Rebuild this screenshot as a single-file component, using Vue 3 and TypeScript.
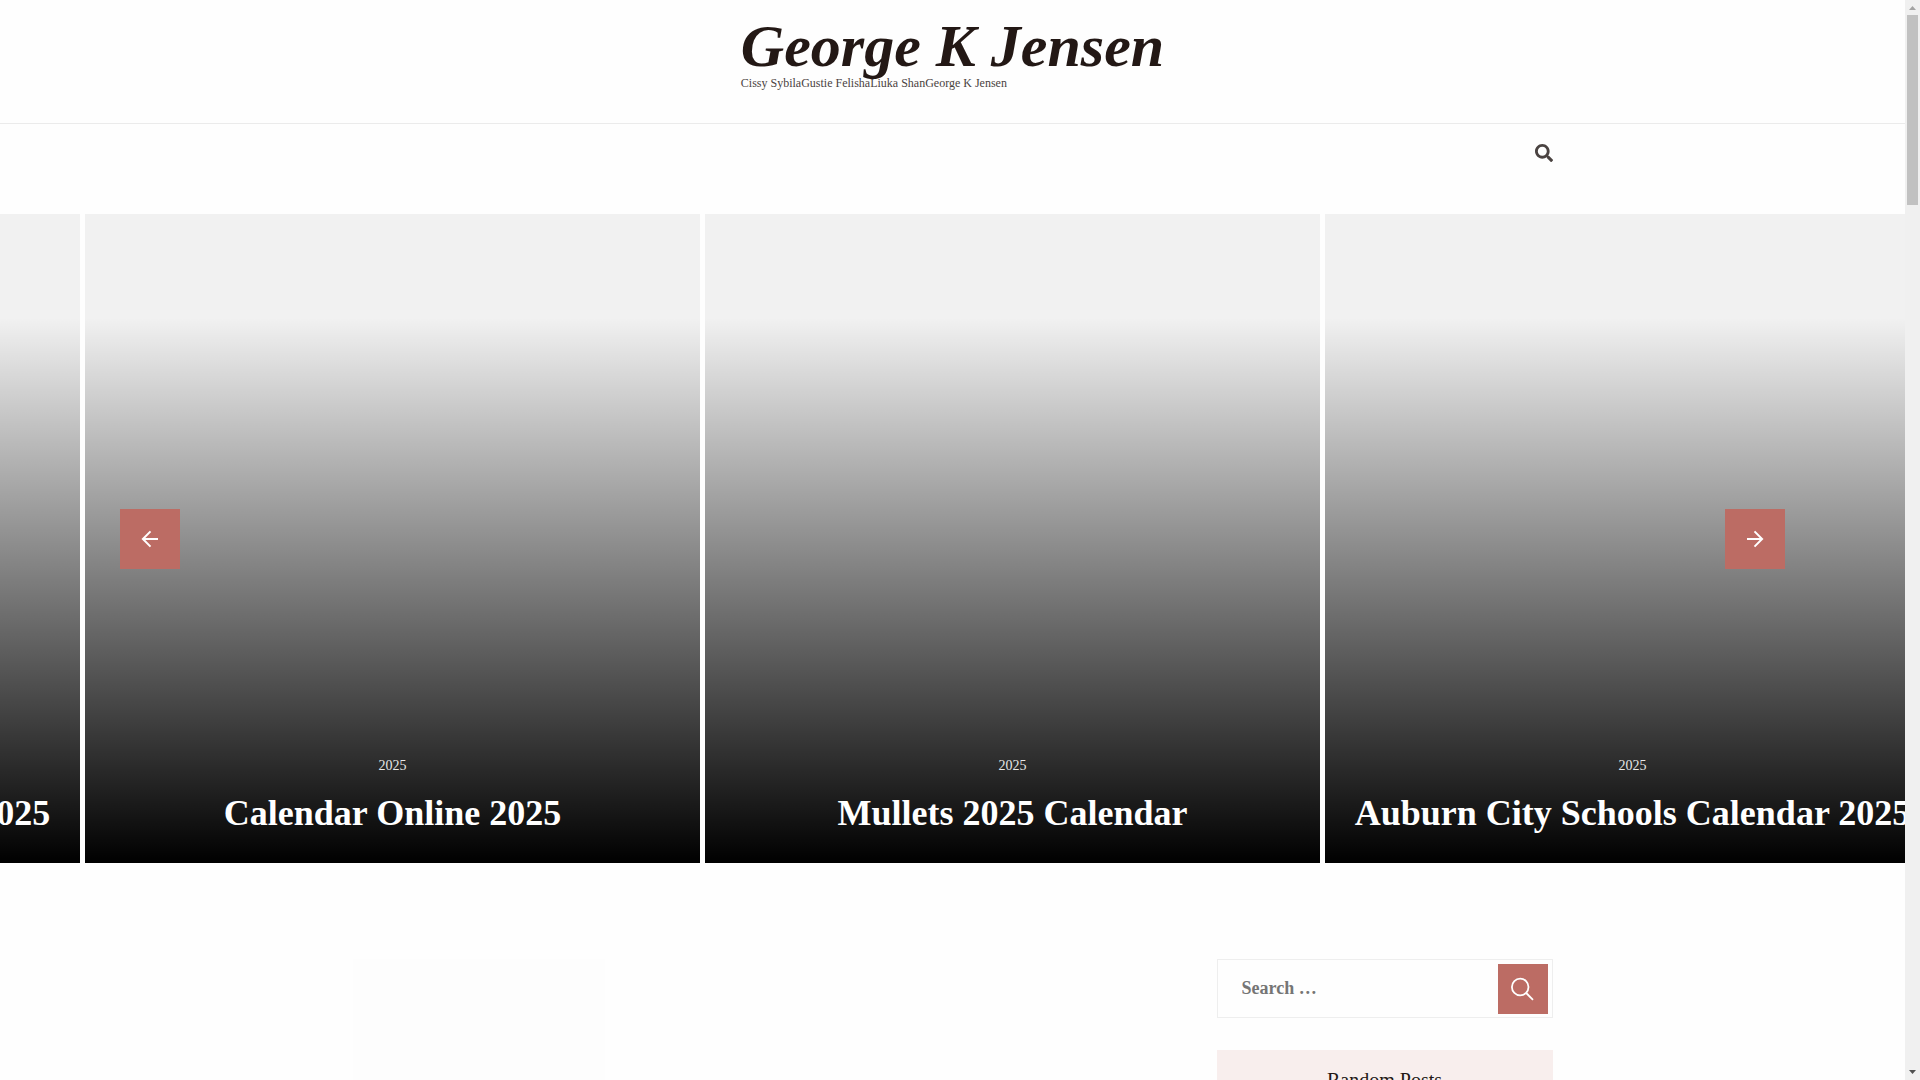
<script setup lang="ts">
import { ref } from 'vue'

interface Slide {
  category: string
  title: string
}

const slides: Slide[] = [
  { category: '2025', title: 'Auburn City Schools Calendar 2025' },
  { category: '2025', title: 'Calendar Online 2025' },
  { category: '2025', title: 'Mullets 2025 Calendar' },
  { category: '2025', title: 'Auburn City Schools Calendar 2025' },
]

const query = ref('')
</script>

<template>
  <div class="window">
    <div class="page">
      <header>
        <div class="masthead">
          <div class="branding">
            <h1><a href="#">George K Jensen</a></h1>
            <p>Cissy SybilaGustie FelishaLiuka ShanGeorge K Jensen</p>
          </div>
        </div>
        <div class="container toolbar">
          <button class="toggle" type="button" aria-label="Open search">
            <svg width="18" height="18" viewBox="0 0 512 512" fill="currentColor">
              <path d="M505 442.700L405.300 343c-4.500-4.500-10.600-7-17-7H372c27.600-35.300 44-79.700 44-128C416 93.100 322.900 0 208 0S0 93.100 0 208s93.100 208 208 208c48.300 0 92.700-16.400 128-44v16.300c0 6.400 2.500 12.500 7 17l99.700 99.700c9.400 9.400 24.600 9.400 33.900 0l28.300-28.300c9.400-9.400 9.400-24.600.1-34zM208 336c-70.700 0-128-57.200-128-128 0-70.700 57.200-128 128-128 70.700 0 128 57.200 128 128 0 70.700-57.200 128-128 128z" />
            </svg>
          </button>
        </div>
      </header>

      <section class="slider">
        <div class="track">
          <article v-for="(slide, index) in slides" :key="index" class="slide">
            <a class="category" href="#">{{ slide.category }}</a>
            <h2><a href="#">{{ slide.title }}</a></h2>
          </article>
        </div>
        <button class="nav prev" type="button" aria-label="Previous">
          <svg width="18" height="18" viewBox="0 0 18 18" fill="none" stroke="currentColor" stroke-width="2">
            <path d="M17 9H2M9.500 1.400L1.900 9L9.500 16.600" />
          </svg>
        </button>
        <button class="nav next" type="button" aria-label="Next">
          <svg width="18" height="18" viewBox="0 0 18 18" fill="none" stroke="currentColor" stroke-width="2">
            <path d="M1 9H16M8.500 1.400L16.100 9L8.500 16.600" />
          </svg>
        </button>
      </section>

      <div class="container content">
        <main><div class="thumb"></div></main>
        <aside>
          <form class="search" @submit.prevent>
            <input v-model="query" type="search" placeholder="Search …" aria-label="Search for" />
            <button type="submit" aria-label="Search">
              <svg width="24" height="24" viewBox="0 0 24 24" fill="none" stroke="currentColor" stroke-width="1.800">
                <circle cx="9.200" cy="10" r="8.300" />
                <path d="M15.200 16L22 22.800" />
              </svg>
            </button>
          </form>
          <section class="widget">
            <h2>Random Posts</h2>
          </section>
        </aside>
      </div>
    </div>

    <div class="scrollbar" aria-hidden="true">
      <svg width="15" height="15" viewBox="0 0 15 15"><path d="M4 10h7L7.500 6z" fill="#a3a3a3" /></svg>
      <div class="thumb-area"><div class="handle"></div></div>
      <svg width="15" height="15" viewBox="0 0 15 15"><path d="M4 5h7L7.500 9z" fill="#505050" /></svg>
    </div>
  </div>
</template>

<style>
body {
  margin: 0;
  background: #fefefe;
}
</style>

<style scoped>
* {
  box-sizing: border-box;
}

.window {
  display: flex;
  height: 100vh;
  overflow: hidden;
  font-family: "Liberation Serif", "Times New Roman", serif;
  color: #231815;
}

.page {
  flex: 1;
  min-width: 0;
  overflow: hidden;
}

h1,
h2,
p {
  margin: 0;
}

a {
  color: inherit;
  text-decoration: none;
}

button {
  display: flex;
  align-items: center;
  justify-content: center;
  padding: 0;
  border: 0;
  border-radius: 0;
  cursor: pointer;
}

.container {
  width: 100%;
  max-width: 1200px;
  margin: 0 auto;
}

.masthead {
  display: flex;
  justify-content: center;
  padding: 16px 0 32px;
  border-bottom: 1px solid #ebebeb;
}

.branding h1 {
  font-size: 60px;
  line-height: 60px;
  font-style: italic;
  font-weight: 700;
}

.branding p {
  font-size: 12px;
  line-height: 15px;
  color: #4a4341;
}

.toolbar {
  display: flex;
  justify-content: flex-end;
  height: 90px;
  padding-top: 20px;
}

.toggle {
  width: 18px;
  height: 18px;
  background: none;
  color: #4a4341;
}

.slider {
  position: relative;
  overflow: hidden;
}

.track {
  display: flex;
  gap: 5px;
  margin-left: -535px;
}

.slide {
  display: flex;
  flex: 0 0 615px;
  flex-direction: column;
  align-items: center;
  justify-content: flex-end;
  height: 649px;
  padding: 0 20px 26px;
  background: linear-gradient(to bottom, transparent 16%, #000 100%) #f1f1f1;
  color: #fff;
  text-align: center;
  white-space: nowrap;
}

.category {
  margin-bottom: 13px;
  font-size: 14px;
  line-height: 20px;
  color: #e8e8e8;
}

.slide h2 {
  font-size: 36px;
  line-height: 48px;
}

.nav {
  position: absolute;
  top: 50%;
  width: 60px;
  height: 60px;
  margin-top: -30px;
  background: #bc6c64;
  color: #fff;
}

.prev {
  left: 120px;
}

.next {
  right: 120px;
}

.content {
  display: flex;
  justify-content: space-between;
  padding-top: 96px;
}

.thumb {
  width: 252px;
  height: 240px;
  background: #fdfdfd;
}

aside {
  width: 336px;
}

.search {
  display: flex;
  align-items: flex-start;
  margin-bottom: 32px;
  padding: 4px 4px 3px;
  border: 1px solid #eee;
}

.search input {
  flex: 1;
  min-width: 0;
  height: 48px;
  padding: 0 20px;
  border: 0;
  outline: 0;
  background: none;
  font: 700 18px/24px "Liberation Serif", "Times New Roman", serif;
  color: #231815;
}

.search input::placeholder {
  color: #757575;
}

.search button {
  width: 50px;
  height: 50px;
  background: #bc6c64;
  color: #fff;
}

.widget h2 {
  padding: 15px;
  background: #f8eeed;
  font-size: 20px;
  line-height: 30px;
  font-weight: 400;
  text-align: center;
}

.scrollbar {
  display: flex;
  flex: 0 0 15px;
  flex-direction: column;
  background: #f0f0f0;
}

.thumb-area {
  flex: 1;
  padding: 0 2px;
}

.handle {
  height: 190px;
  background: #c1c1c1;
}
</style>
